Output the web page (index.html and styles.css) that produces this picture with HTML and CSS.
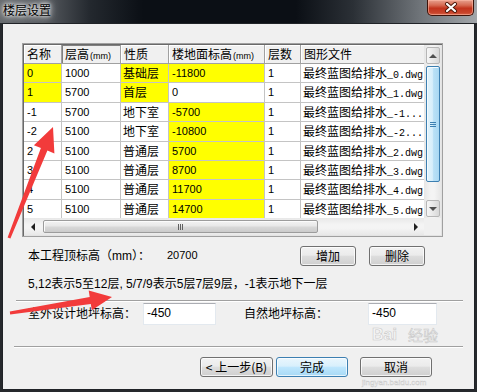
FILE: index.html
```html
<!DOCTYPE html>
<html>
<head>
<meta charset="utf-8">
<title>楼层设置</title>
<link rel="stylesheet" href="styles.css">
</head>
<body>
<div class="window">
  <div class="titlebar">
    <span class="title">楼层设置</span>
    <div class="close">
      <svg width="14" height="11" viewBox="0 0 14 11">
        <path d="M3 2 L11 9 M11 2 L3 9" stroke="#4a1608" stroke-width="4" stroke-linecap="round"/>
        <path d="M3 2 L11 9 M11 2 L3 9" stroke="#ffffff" stroke-width="2.2" stroke-linecap="round"/>
      </svg>
    </div>
  </div>
  <div class="client">
    <div class="gridbox">
      <div class="gridmain">
        <div class="cells">
          <div class="grid">
            <div class="c h first">名称</div>
            <div class="c h pressed">层高<span class="u">(mm)</span></div>
            <div class="c h">性质</div>
            <div class="c h">楼地面标高<span class="u">(mm)</span></div>
            <div class="c h">层数</div>
            <div class="c h">图形文件</div>

            <div class="c n first y">0</div><div class="c n">1000</div><div class="c y">基础层</div><div class="c n y">-11800</div><div class="c n">1</div><div class="c">最终蓝图给排水<span class="a">_0.dwg</span></div>
            <div class="c n first y">1</div><div class="c n">5700</div><div class="c y">首层</div><div class="c n">0</div><div class="c n">1</div><div class="c">最终蓝图给排水<span class="a">_1.dwg</span></div>
            <div class="c n first">-1</div><div class="c n">5700</div><div class="c">地下室</div><div class="c n y">-5700</div><div class="c n">1</div><div class="c">最终蓝图给排水<span class="a">_-1...</span></div>
            <div class="c n first">-2</div><div class="c n">5100</div><div class="c">地下室</div><div class="c n y">-10800</div><div class="c n">1</div><div class="c">最终蓝图给排水<span class="a">_-2...</span></div>
            <div class="c n first">2</div><div class="c n">5100</div><div class="c">普通层</div><div class="c n y">5700</div><div class="c n">1</div><div class="c">最终蓝图给排水<span class="a">_2.dwg</span></div>
            <div class="c n first">3</div><div class="c n">5100</div><div class="c">普通层</div><div class="c n y">8700</div><div class="c n">1</div><div class="c">最终蓝图给排水<span class="a">_3.dwg</span></div>
            <div class="c n first">4</div><div class="c n">5100</div><div class="c">普通层</div><div class="c n y">11700</div><div class="c n">1</div><div class="c">最终蓝图给排水<span class="a">_4.dwg</span></div>
            <div class="c n first">5</div><div class="c n">5100</div><div class="c">普通层</div><div class="c n y">14700</div><div class="c n">1</div><div class="c">最终蓝图给排水<span class="a">_5.dwg</span></div>
          </div>
        </div>
        <div class="vscroll">
          <div class="sbtn"><span class="tri-up"></span></div>
          <div class="vthumb"><span class="grip-h"></span></div>
          <div class="vtrack"></div>
          <div class="sbtn"><span class="tri-down"></span></div>
        </div>
      </div>
      <div class="hrow">
        <div class="hscroll">
          <div class="harrow"><span class="tri-left"></span></div>
          <div class="hthumb"><span class="grip-v"></span></div>
          <div class="htrack"></div>
          <div class="harrow"><span class="tri-right"></span></div>
        </div>
        <div class="corner"></div>
      </div>
    </div>

    <div class="toprow">
      <span class="lbl1">本工程顶标高（mm）：</span>
      <span class="val">20700</span>
      <div class="btn w56">增加</div>
      <div class="btn w56 gap13">删除</div>
    </div>

    <div class="hint">5,12表示5至12层, 5/7/9表示5层7层9层，-1表示地下一层</div>

    <div class="sep sep1"></div>

    <div class="inputs">
      <span class="lbl2">室外设计地坪标高：</span>
      <div class="inp w73">-450</div>
      <span class="lbl3">自然地坪标高：</span>
      <div class="inp w69">-450</div>
    </div>

    <div class="sep sep2"></div>

    <div class="btnrow">
      <div class="btn b-prev">&lt; 上一步(B)</div>
      <div class="btn def b-ok">完成</div>
      <div class="btn b-cancel">取消</div>
    </div>
  </div>

  <svg class="arrows" width="477" height="392" viewBox="0 0 477 392">
    <polygon fill="#f23b3b" points="53,127 54.4,153.4 47.4,150.6 10.4,238.6 7.6,237.4 40.9,148 33.9,145.2"/>
    <polygon fill="#f23b3b" points="112,297 91.8,310.3 90.8,303.9 10.2,314.5 9.8,311.5 89.7,297 88.7,290.5"/>
  </svg>
  <div class="watermark"><span class="wm-bai">Bai</span><span class="wm-jy">经验</span></div>
  <div class="wm-url">jingyan.baidu.com</div>
</div>
</body>
</html>
```

FILE: styles.css
```css
* { box-sizing: border-box; }
html, body { margin: 0; padding: 0; }
body {
  width: 477px;
  height: 392px;
  overflow: hidden;
  background: #1b1e22;
  font-family: "Liberation Sans", "Noto Sans CJK SC", sans-serif;
  font-size: 12px;
  color: #000;
}
.window {
  position: relative;
  width: 477px;
  height: 392px;
  display: flex;
  flex-direction: column;
  background:
    linear-gradient(to bottom, rgba(0,0,0,0) 23px, #26292d 23px),
    linear-gradient(90deg, #666a6e 0%, #585c61 9%, #23282e 19%, #0b0f15 30%, #0b0f15 62%, #2b3036 74%, #6f7479 88%, #a2a6aa 100%);
}
.titlebar {
  height: 23px;
  display: flex;
  justify-content: space-between;
  align-items: flex-start;
}
.title {
  margin: 3px 0 0 3px;
  font-family: "Noto Sans CJK SC", sans-serif;
  font-size: 12px;
  line-height: 14px;
  color: #000;
  text-shadow: 0 0 3px #fff, 0 0 6px #fff, 0 0 10px rgba(255,255,255,0.8);
}
.close {
  width: 47px;
  height: 16px;
  margin-right: 3px;
  border: 1px solid #3e1309;
  border-top: none;
  border-radius: 0 0 5px 5px;
  background: linear-gradient(#e7a18e 0%, #d66a52 35%, #c2341d 55%, #c8442b 85%, #d8664b 100%);
  box-shadow: inset 0 0 0 1px rgba(255,190,170,0.55);
  display: flex;
  align-items: center;
  justify-content: center;
}
.close svg { display: block; }

.client {
  flex: 1;
  margin: 0 2px 2px 2px;
  background: #f0f0f0;
  border: 1px solid #202327;
  padding-top: 19px;
  display: flex;
  flex-direction: column;
}

/* grid */
.gridbox {
  margin-left: 19px;
  width: 421px;
  height: 194px;
  border: 1px solid #a0a0a0;
  padding: 1px;
  box-shadow: inset 1px 1px 0 #696969, inset -1px -1px 0 #e3e3e3;
  background: #f0f0f0;
}
.gridmain { display: flex; height: 173px; }
.cells {
  width: 400px;
  height: 173px;
  overflow: hidden;
  background: #ffffff;
}
.grid {
  display: grid;
  grid-template-columns: 38px 59px 48px 96px 36px 140px;
  grid-template-rows: 19px;
  grid-auto-rows: 19.4px;
}
.c {
  display: block;
  border-right: 1px solid #c4c4c4;
  border-bottom: 1px solid #c4c4c4;
  padding-left: 2px;
  white-space: nowrap;
  overflow: hidden;
  background: #ffffff;
  font-family: "Noto Sans CJK SC", sans-serif;
  font-size: 12px;
  line-height: 18px;
}
.c.first { padding-left: 3px; }
.c.n { font-family: "Liberation Sans", sans-serif; font-size: 11px; padding-left: 3px; }
.c.y { background: #ffff00; }
.c.h {
  background: #f0f0f0;
  border-right: 1px solid #a0a0a0;
  border-bottom: 1px solid #a0a0a0;
  box-shadow: inset 1px 1px 0 #ffffff;
  padding-left: 3px;
}
.c.h.pressed { box-shadow: inset 1px 1px 0 #808080; }
.u { font-family: "Liberation Sans", sans-serif; font-size: 9px; margin-left: 1px; }
.a { font-family: "Liberation Mono", monospace; font-size: 10px; }

.vscroll {
  width: 17px;
  height: 173px;
  background: linear-gradient(90deg, #e6e6e6, #f4f4f4 40%, #f4f4f4 60%, #e6e6e6);
  display: flex;
  flex-direction: column;
  align-items: center;
  padding: 2px 0 1px 0;
}
.sbtn {
  width: 14px;
  height: 17px;
  border: 1px solid #b6b6b6;
  border-radius: 2px;
  background: linear-gradient(90deg, #f6f6f6, #e8e8e8 50%, #d8d8d8);
  display: flex;
  align-items: center;
  justify-content: center;
}
.tri-up { width: 0; height: 0; border-left: 4px solid transparent; border-right: 4px solid transparent; border-bottom: 4px solid #505050; }
.tri-down { width: 0; height: 0; border-left: 4px solid transparent; border-right: 4px solid transparent; border-top: 4px solid #505050; }
.vthumb {
  margin-top: 2px;
  width: 14px;
  height: 116px;
  border: 1px solid #3c7fb1;
  border-radius: 2px;
  background: linear-gradient(90deg, #e3f4fc, #d6eefb 45%, #b9e0f6 55%, #a9d8f3);
  box-shadow: inset 1px 1px 0 #f4fbff;
  display: flex;
  align-items: center;
  justify-content: center;
}
.grip-h {
  width: 6px;
  height: 5px;
  border-top: 1px solid #3c7fb1;
  border-bottom: 1px solid #3c7fb1;
  position: relative;
}
.grip-h::after {
  content: "";
  position: absolute;
  left: 0; right: 0; top: 1px;
  border-top: 1px solid #3c7fb1;
}
.vtrack { flex: 1; }

.hrow { display: flex; height: 17px; }
.hscroll {
  width: 400px;
  height: 17px;
  background: linear-gradient(#e8e8e8, #f4f4f4 40%, #f4f4f4 60%, #e8e8e8);
  display: flex;
  align-items: center;
}
.harrow { width: 17px; height: 17px; display: flex; align-items: center; justify-content: center; }
.tri-left { width: 0; height: 0; border-top: 4px solid transparent; border-bottom: 4px solid transparent; border-right: 4px solid #202020; }
.tri-right { width: 0; height: 0; border-top: 4px solid transparent; border-bottom: 4px solid transparent; border-left: 4px solid #202020; }
.hthumb {
  margin-left: 2px;
  width: 275px;
  height: 13px;
  border: 1px solid #9c9c9c;
  border-radius: 2px;
  background: linear-gradient(#f3f3f3, #e8e8e8 45%, #d8d8d8 55%, #cbcbcb);
  box-shadow: inset 1px 1px 0 #fbfbfb;
  display: flex;
  align-items: center;
  justify-content: center;
}
.grip-v {
  width: 5px;
  height: 6px;
  border-left: 1px solid #606060;
  border-right: 1px solid #606060;
  position: relative;
}
.grip-v::after {
  content: "";
  position: absolute;
  top: 0; bottom: 0; left: 1px;
  border-left: 1px solid #606060;
}
.htrack { flex: 1; }
.corner { width: 17px; height: 17px; background: #f0f0f0; }

/* rows below grid */
.toprow {
  display: flex;
  align-items: center;
  height: 20px;
  margin-top: 9px;
}
.lbl1 { margin-left: 25px; width: 139px; line-height: 14px; }
.val { width: 133px; font-size: 11px; line-height: 14px; margin-top: -3px; }
.btn {
  height: 20px;
  border: 1px solid #707070;
  border-radius: 3px;
  background: linear-gradient(#f2f2f2 0%, #ebebeb 45%, #dddddd 52%, #cfcfcf 100%);
  box-shadow: inset 0 0 0 1px rgba(255,255,255,0.75);
  display: flex;
  align-items: center;
  justify-content: center;
  font-family: "Noto Sans CJK SC", sans-serif;
  font-size: 12px;
  line-height: 14px;
}
.btn.def {
  border-color: #3c7fb1;
  background: linear-gradient(#eaf6fd 0%, #d9f0fc 45%, #bee6fd 52%, #a7d9f5 100%);
  box-shadow: inset 0 0 0 1px rgba(255,255,255,0.7);
}
.w56 { width: 56px; }
.gap13 { margin-left: 13px; }

.hint {
  margin: 11px 0 0 25px;
  height: 14px;
  line-height: 14px;
  white-space: nowrap;
}

.sep {
  height: 2px;
  border-top: 1px solid #a0a0a0;
  border-bottom: 1px solid #ffffff;
}
.sep1 { margin: 9px 0 0 13px; width: 447px; }
.sep2 { margin: 21px 0 0 11px; width: 449px; }

.inputs {
  display: flex;
  align-items: center;
  height: 22px;
  margin-top: 1px;
}
.lbl2 { margin-left: 25px; width: 115px; line-height: 14px; }
.lbl3 { margin-left: 28px; width: 124px; line-height: 14px; }
.inp {
  height: 22px;
  background: #ffffff;
  border: 1px solid #e3e9ef;
  border-top-color: #abadb3;
  padding: 2px 0 0 3px;
  font-size: 12px;
  line-height: 14px;
}
.w73 { width: 73px; }
.w69 { width: 69px; }

.btnrow {
  display: flex;
  height: 20px;
  margin-top: 9px;
}
.b-prev { margin-left: 197px; width: 73px; }
.b-ok { margin-left: 3px; width: 72px; }
.b-cancel { margin-left: 12px; width: 72px; }

/* annotation overlay */
.arrows {
  position: absolute;
  left: 0;
  top: 0;
  pointer-events: none;
}
.watermark {
  position: absolute;
  left: 372px;
  top: 326px;
  width: 90px;
  height: 20px;
  pointer-events: none;
  opacity: 0.45;
  color: #ffffff;
  -webkit-text-stroke: 0.6px #9a9a9a;
}
.wm-bai { position: absolute; left: 0; top: 0; font-family: "Liberation Sans", sans-serif; font-weight: bold; font-size: 16px; line-height: 18px; }
.wm-jy { position: absolute; left: 36px; top: 0; font-family: "Noto Sans CJK SC", sans-serif; font-size: 15px; line-height: 18px; }
.wm-url {
  position: absolute;
  left: 362px;
  top: 378px;
  font-family: "Liberation Sans", sans-serif;
  font-size: 8px;
  line-height: 9px;
  color: #ffffff;
  opacity: 0.45;
  -webkit-text-stroke: 0.4px #9a9a9a;
  pointer-events: none;
}
```
